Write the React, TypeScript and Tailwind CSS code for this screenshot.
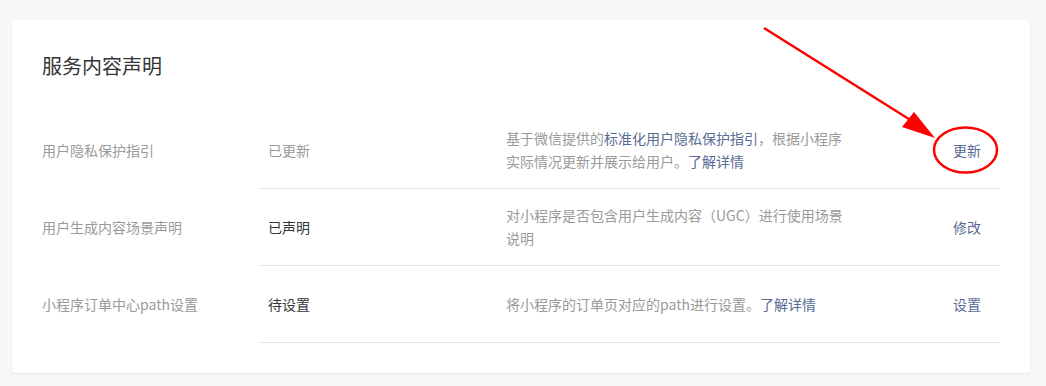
import React from 'react';

const font = { fontFamily: '"Noto Sans CJK SC", "Noto Sans", sans-serif' };

type Row = {
  label: string;
  status: string;
  statusDone?: boolean;
  desc: React.ReactNode;
  action: string;
};

const Link = ({ children }: { children: React.ReactNode }) => (
  <a className="text-[#576b95] cursor-pointer">{children}</a>
);

const rows: Row[] = [
  {
    label: '用户隐私保护指引',
    status: '已更新',
    desc: (
      <>
        基于微信提供的<Link>标准化用户隐私保护指引</Link>，根据小程序实际情况更新并展示给用户。<Link>了解详情</Link>
      </>
    ),
    action: '更新',
  },
  {
    label: '用户生成内容场景声明',
    status: '已声明',
    statusDone: true,
    desc: '对小程序是否包含用户生成内容（UGC）进行使用场景说明',
    action: '修改',
  },
  {
    label: '小程序订单中心path设置',
    status: '待设置',
    statusDone: true,
    desc: (
      <>
        将小程序的订单页对应的path进行设置。<Link>了解详情</Link>
      </>
    ),
    action: '设置',
  },
];

export default function App() {
  return (
    <div className="relative w-[1046px] h-[386px] bg-[#f6f7f9] pt-[20px] pl-[12px] pr-[16px]" style={font}>
      <div className="bg-white rounded-[4px] shadow-[0_1px_2px_rgba(0,0,0,0.08)] pt-[32px] pb-[30px] px-[30px]">
        <h2 className="text-[20px] leading-[28px] text-[#353535] font-normal mb-[32px]">服务内容声明</h2>
        <div>
          {rows.map((r) => (
            <div key={r.label} className="flex h-[77px]">
              <div className="w-[216px] shrink-0 flex items-center text-[14px] text-[#9a9a9a]">{r.label}</div>
              <div className="flex-1 flex items-center border-b border-[#e7e7eb]">
                <div
                  className={
                    'w-[248px] shrink-0 pl-[10px] text-[14px] ' +
                    (r.statusDone ? 'text-[#353535]' : 'text-[#9a9a9a]')
                  }
                >
                  {r.status}
                </div>
                <div className="w-[342px] text-[14px] leading-[23px] text-[#9a9a9a]">{r.desc}</div>
                <div className="flex-1 flex justify-end pr-[19px] text-[14px]">
                  <Link>{r.action}</Link>
                </div>
              </div>
            </div>
          ))}
        </div>
      </div>

      <svg className="absolute inset-0 pointer-events-none" width="1046" height="386" viewBox="0 0 1046 386">
        <line x1="764" y1="28" x2="912" y2="121" stroke="#ff0000" strokeWidth="2.5" />
        <polygon points="935,138 902,127 914,112" fill="#ff0000" />
        <ellipse cx="965.5" cy="150" rx="31.5" ry="22.5" fill="none" stroke="#ff0000" strokeWidth="2.5" />
      </svg>
    </div>
  );
}
